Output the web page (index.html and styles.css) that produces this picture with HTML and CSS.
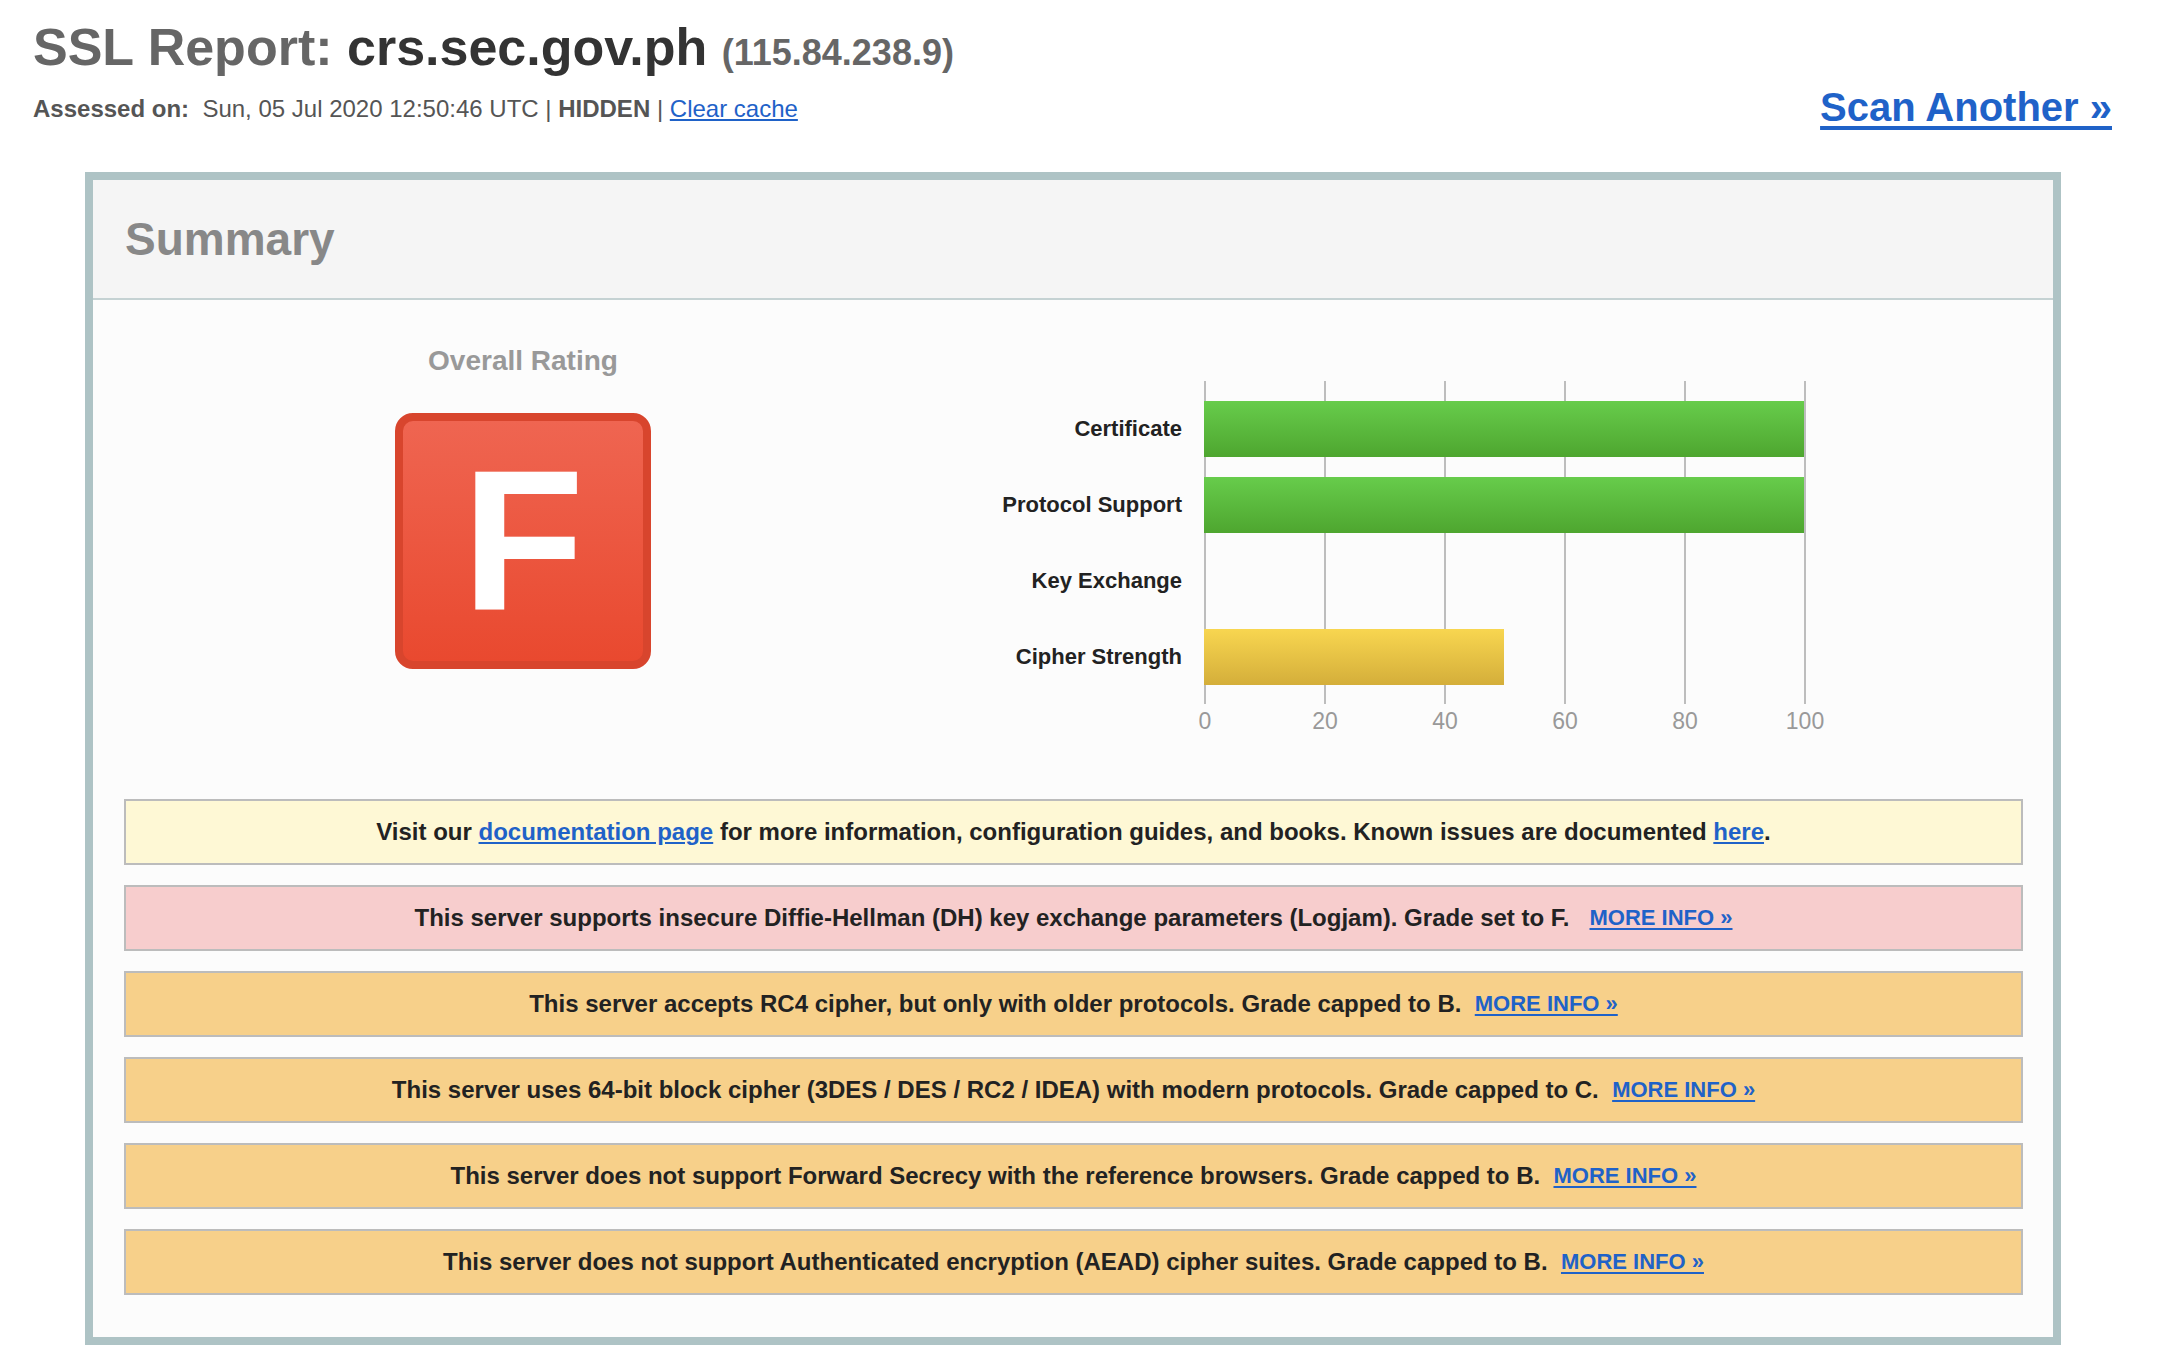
FILE: index.html
```html
<!DOCTYPE html>
<html lang="en">
<head>
<meta charset="utf-8">
<title>SSL Report: crs.sec.gov.ph</title>
<link rel="stylesheet" href="styles.css">
</head>
<body>
<header class="report-head">
  <div class="title-block">
    <h1 class="title"><span class="t-label">SSL Report:</span> <span class="t-host">crs.sec.gov.ph</span> <span class="t-ip">(115.84.238.9)</span></h1>
    <div class="assessed"><b>Assessed on:</b>&nbsp; Sun, 05 Jul 2020 12:50:46 UTC | <b>HIDDEN</b> | <a href="#" class="link">Clear cache</a></div>
  </div>
  <a href="#" class="scan">Scan Another &raquo;</a>
</header>

<section class="summary">
  <div class="summary-head">Summary</div>
  <div class="summary-body">
    <div class="rating-row">
      <div class="rating">
        <div class="rating-title">Overall Rating</div>
        <div class="grade">F</div>
      </div>
      <div class="chart">
        <div class="labels">
          <div class="label">Certificate</div>
          <div class="label">Protocol Support</div>
          <div class="label">Key Exchange</div>
          <div class="label">Cipher Strength</div>
        </div>
        <div class="plot-col">
          <div class="plot">
            <div class="bar-row"><div class="bar green" style="width:600px"></div></div>
            <div class="bar-row"><div class="bar green" style="width:600px"></div></div>
            <div class="bar-row"></div>
            <div class="bar-row"><div class="bar yellow" style="width:300px"></div></div>
          </div>
          <div class="axis">
            <span>0</span><span>20</span><span>40</span><span>60</span><span>80</span><span>100</span>
          </div>
        </div>
      </div>
    </div>

    <div class="messages">
      <div class="msg info">Visit our <a href="#" class="link">documentation page</a> for more information, configuration guides, and books. Known issues are documented <a href="#" class="link">here</a>.</div>
      <div class="msg error">This server supports insecure Diffie-Hellman (DH) key exchange parameters (Logjam). Grade set to F.&nbsp;&nbsp; <a href="#" class="more">MORE INFO &raquo;</a></div>
      <div class="msg warn">This server accepts RC4 cipher, but only with older protocols. Grade capped to B.&nbsp; <a href="#" class="more">MORE INFO &raquo;</a></div>
      <div class="msg warn">This server uses 64-bit block cipher (3DES / DES / RC2 / IDEA) with modern protocols. Grade capped to C.&nbsp; <a href="#" class="more">MORE INFO &raquo;</a></div>
      <div class="msg warn">This server does not support Forward Secrecy with the reference browsers. Grade capped to B.&nbsp; <a href="#" class="more">MORE INFO &raquo;</a></div>
      <div class="msg warn">This server does not support Authenticated encryption (AEAD) cipher suites. Grade capped to B.&nbsp; <a href="#" class="more">MORE INFO &raquo;</a></div>
    </div>
  </div>
</section>
</body>
</html>
```

FILE: styles.css
```css
* { box-sizing: border-box; }

html, body {
  margin: 0;
  padding: 0;
  background: #ffffff;
}

body {
  font-family: "Liberation Sans", Arial, Helvetica, sans-serif;
  color: #222;
}

.report-head {
  display: flex;
  justify-content: space-between;
  align-items: flex-start;
  padding: 17px 46px 0 33px;
}

.title {
  margin: 0;
  font-size: 52px;
  line-height: 60px;
  font-weight: bold;
  color: #666;
  white-space: nowrap;
}

.t-host { color: #333; }

.t-ip {
  font-size: 36px;
  color: #666;
}

.assessed {
  margin-top: 12px;
  font-size: 24px;
  line-height: 28px;
  color: #555;
}

.link {
  color: #1f62c8;
  text-decoration: underline;
}

.scan {
  margin-top: 67px;
  font-size: 40px;
  line-height: 46px;
  font-weight: bold;
  color: #1f62c8;
  text-decoration: underline;
  text-decoration-thickness: 4px;
  text-underline-offset: 5px;
}

.summary {
  margin: 42px 0 0 85px;
  width: 1976px;
  border: 8px solid #aec3c5;
}

.summary-head {
  height: 120px;
  padding-left: 32px;
  background: #f5f5f5;
  border-bottom: 2px solid #c5d2d3;
  font-size: 46px;
  line-height: 118px;
  font-weight: bold;
  color: #888;
}

.summary-body {
  background: #fcfcfc;
  padding-bottom: 42px;
}

.rating-row {
  display: flex;
  align-items: flex-start;
}

.rating {
  width: 860px;
  padding-top: 45px;
  display: flex;
  flex-direction: column;
  align-items: center;
}

.rating-title {
  font-size: 28px;
  line-height: 32px;
  font-weight: bold;
  color: #999;
}

.grade {
  margin-top: 36px;
  width: 256px;
  height: 256px;
  border: 8px solid #d8452d;
  border-radius: 18px;
  background: linear-gradient(to bottom, #ef6551, #e9492f);
  color: #fff;
  font-size: 200px;
  font-weight: bold;
  line-height: 1;
  display: flex;
  align-items: center;
  justify-content: center;
}

.chart {
  padding-top: 81px;
  display: grid;
  grid-template-columns: 229px 602px;
  column-gap: 22px;
}

.labels {
  padding-top: 20px;
  display: flex;
  flex-direction: column;
  gap: 20px;
}

.label {
  height: 56px;
  line-height: 56px;
  text-align: right;
  font-size: 22px;
  font-weight: bold;
  color: #222;
  white-space: nowrap;
}

.plot {
  height: 323px;
  padding-top: 20px;
  display: flex;
  flex-direction: column;
  gap: 20px;
  background: repeating-linear-gradient(to right, #bdbdbd 0 2px, transparent 2px 120px);
}

.bar-row {
  height: 56px;
}

.bar {
  height: 56px;
}

.bar.green {
  background: linear-gradient(to bottom, #67cc4b, #4ea62f);
}

.bar.yellow {
  background: linear-gradient(to bottom, #f8d650, #d4ae3a);
}

.axis {
  margin: 4px 0 0 -59px;
  width: 720px;
  display: flex;
}

.axis span {
  flex: 0 0 120px;
  width: 120px;
  text-align: center;
  font-size: 23px;
  line-height: 26px;
  color: #999;
}

.messages {
  margin-top: 65px;
  padding: 0 30px 0 31px;
  display: flex;
  flex-direction: column;
  gap: 20px;
}

.msg {
  height: 66px;
  border: 2px solid #bcbcbc;
  display: flex;
  align-items: center;
  justify-content: center;
  font-size: 24px;
  font-weight: bold;
  color: #222;
  white-space: pre-wrap;
}

.msg.info { background: #fef8d5; }
.msg.error { background: #f7cdcd; }
.msg.warn { background: #f7d08a; }

.more {
  font-size: 22px;
  color: #1f62c8;
  text-decoration: underline;
  text-decoration-thickness: 2px;
  text-underline-offset: 3px;
}
```
